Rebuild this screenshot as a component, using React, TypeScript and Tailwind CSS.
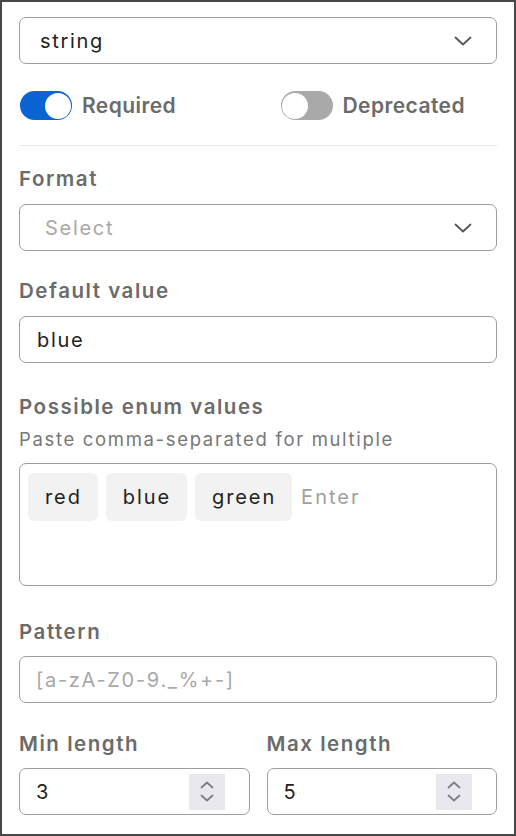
import React from "react";

function Chevron({ className = "" }: { className?: string }) {
  return (
    <svg className={className} width="18" height="10" viewBox="0 0 18 10" fill="none">
      <path d="M1.5 1.5L9 8.5L16.5 1.5" stroke="#555" strokeWidth="1.8" strokeLinecap="round" strokeLinejoin="round" />
    </svg>
  );
}

function Toggle({ on }: { on: boolean }) {
  return (
    <div
      className={`relative h-[29px] w-[52px] shrink-0 rounded-full ${on ? "bg-[#0a64d2]" : "bg-[#a9a9a9]"}`}
    >
      <div
        className={`absolute top-[1.5px] h-[26px] w-[26px] rounded-full bg-white ${
          on ? "right-[1.5px]" : "left-[1.5px]"
        }`}
      />
    </div>
  );
}

function Label({ children, className = "" }: { children: React.ReactNode; className?: string }) {
  return (
    <div className={`text-[20.5px] leading-[24px] font-semibold tracking-[0.075em] text-[#6b6b6b] ${className}`}>
      {children}
    </div>
  );
}

function Spinner() {
  return (
    <div className="flex h-[36px] w-[36px] flex-col items-center justify-center gap-[5px] bg-[#e8e8ee]">
      <svg width="14" height="8" viewBox="0 0 14 8" fill="none">
        <path d="M1.5 6.5L7 1.5L12.5 6.5" stroke="#7d7d85" strokeWidth="1.8" strokeLinecap="round" strokeLinejoin="round" />
      </svg>
      <svg width="14" height="8" viewBox="0 0 14 8" fill="none">
        <path d="M1.5 1.5L7 6.5L12.5 1.5" stroke="#7d7d85" strokeWidth="1.8" strokeLinecap="round" strokeLinejoin="round" />
      </svg>
    </div>
  );
}

const box = "h-[47px] rounded-[7px] border-[1.5px] border-[#9d9d9d] bg-white";
const text = "text-[20px] tracking-[0.085em]";

export default function App() {
  return (
    <div
      className="h-[836px] w-[516px] border-2 border-[#474747] bg-white px-[17px] pt-[15px] text-[#222]"
      style={{ fontFamily: "Inter, 'Noto Sans', sans-serif" }}
    >
      <div className={`${box} flex items-center justify-between pl-[20px] pr-[24px]`}>
        <span className={text}>string</span>
        <Chevron />
      </div>

      <div className="mt-[27px] grid grid-cols-2 gap-[44px] pl-[1px]">
        <div className="flex h-[29px] items-center gap-[10px]">
          <Toggle on />
          <span className="text-[21px] leading-[29px] font-semibold tracking-[0.02em] text-[#6b6b6b]">Required</span>
        </div>
        <div className="flex h-[29px] items-center gap-[10px]">
          <Toggle on={false} />
          <span className="text-[21px] leading-[29px] font-semibold tracking-[0.02em] text-[#6b6b6b]">Deprecated</span>
        </div>
      </div>

      <div className="mt-[25px] h-px bg-[#e9e9e9]" />

      <Label className="mt-[21px]">Format</Label>
      <div className={`${box} mt-[13px] flex items-center justify-between pl-[25px] pr-[24px]`}>
        <span className={`${text} text-[#a8a8a8]`}>Select</span>
        <Chevron />
      </div>

      <Label className="mt-[28px]">Default value</Label>
      <div className={`${box} mt-[13px] flex items-center pl-[17px]`}>
        <span className={text}>blue</span>
      </div>

      <Label className="mt-[32px]">Possible enum values</Label>
      <div className="mt-[8px] text-[18.5px] leading-[24px] tracking-[0.09em] text-[#777]">
        Paste comma-separated for multiple
      </div>
      <div className="mt-[12px] h-[123px] rounded-[7px] border-[1.5px] border-[#9d9d9d] px-[8px] pt-[9px]">
        <div className="flex items-center gap-[8px]">
          {["red", "blue", "green"].map((v) => (
            <span
              key={v}
              className="flex h-[48px] items-center rounded-[6px] bg-[#f2f2f2] pl-[17px] pr-[16px] text-[20px] tracking-[0.095em]"
            >
              {v}
            </span>
          ))}
          <span className="ml-px text-[20px] tracking-[0.1em] text-[#a0a0a0]">Enter</span>
        </div>
      </div>

      <Label className="mt-[34px]">Pattern</Label>
      <div className={`${box} mt-[12px] flex items-center pl-[16px]`}>
        <span className={`${text} text-[#a8a8a8]`}>[a-zA-Z0-9._%+-]</span>
      </div>

      <div className="mt-[29px] grid grid-cols-2 gap-[17px]">
        {[
          { label: "Min length", value: "3" },
          { label: "Max length", value: "5" },
        ].map((f) => (
          <div key={f.label}>
            <Label>{f.label}</Label>
            <div className={`${box} mt-[12px] flex items-center justify-between pl-[16px] pr-[24px]`}>
              <span className={text}>{f.value}</span>
              <Spinner />
            </div>
          </div>
        ))}
      </div>
    </div>
  );
}
